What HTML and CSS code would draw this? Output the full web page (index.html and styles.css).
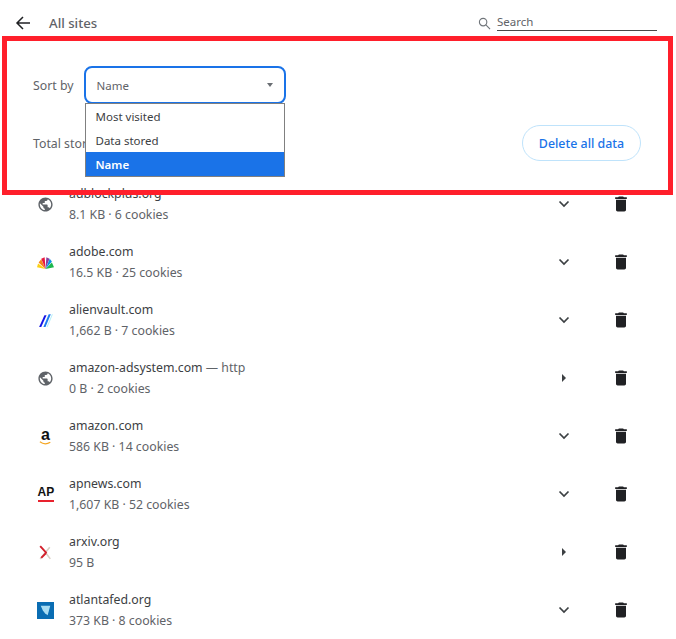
FILE: index.html
```html
<!DOCTYPE html>
<html lang="en">
<head>
<meta charset="utf-8">
<title>All sites</title>
<link rel="stylesheet" href="styles.css">
</head>
<body>
<main class="page">
  <header class="top">
    <svg class="back" viewBox="0 0 16 16"><path d="M15 8H2.500M8 2 2 8l6 6"/></svg>
    <h1 class="title">All sites</h1>
    <div class="search">
      <svg class="search-icon" viewBox="0 0 14 14"><circle cx="5.500" cy="5.500" r="4"/><path d="m8.500 8.500 4.500 4.500"/></svg>
      <div class="search-field">Search</div>
    </div>
  </header>
  <section class="controls">
    <div class="sort-row">
      <span class="label">Sort by</span>
      <div class="select-wrap">
        <div class="select"><span>Name</span><i class="caret"></i></div>
        <ul class="menu">
          <li>Most visited</li>
          <li>Data stored</li>
          <li class="selected">Name</li>
        </ul>
      </div>
    </div>
    <div class="total-row">
      <span class="label">Total storage</span>
      <button class="delete-all">Delete all data</button>
    </div>
  </section>
  <ul class="sites">
    <li class="site">
      <svg class="fav" viewBox="0 0 24 24"><path class="globe" d="M12 2C6.480 2 2 6.480 2 12s4.480 10 10 10 10-4.480 10-10S17.520 2 12 2zm-1 17.930c-3.950-.49-7-3.850-7-7.930 0-.62.08-1.210.21-1.790L9 15v1c0 1.100.9 2 2 2v1.930zm6.900-2.540c-.26-.81-1-1.390-1.900-1.390h-1v-3c0-.55-.45-1-1-1H8v-2h2c.55 0 1-.45 1-1V7h2c1.100 0 2-.9 2-2v-.41c2.930 1.190 5 4.060 5 7.410 0 2.080-.8 3.970-2.100 5.390z"/></svg>
      <div class="info"><div class="name">adblockplus.org</div><div class="meta">8.1 KB · 6 cookies</div></div>
      <svg class="toggle" viewBox="0 0 12 8"><path d="m1.500 1.500 4.500 4.500 4.500-4.500"/></svg>
      <svg class="trash" viewBox="0 0 24 24"><path d="M6 19c0 1.100.9 2 2 2h8c1.100 0 2-.9 2-2V7H6v12zM19 4h-3.500l-1-1h-5l-1 1H5v2h14V4z"/></svg>
    </li>
    <li class="site">
      <svg class="fav" viewBox="0 0 16 16"><path fill="#fcd116" d="M8 14 0 12.500 1 9z"/><path fill="#f5821f" d="M8 14 1.500 8 4 5z"/><path fill="#e8173f" d="M8 14 4 4.500l3.200-1.500z"/><path fill="#8a3f9e" d="M8 14 8.800 3l3 1.500z"/><path fill="#0a8fe6" d="m8 14 4-9.500L14 7z"/><path fill="#1cb84e" d="m8 14 6-6 2 4.500z"/></svg>
      <div class="info"><div class="name">adobe.com</div><div class="meta">16.5 KB · 25 cookies</div></div>
      <svg class="toggle" viewBox="0 0 12 8"><path d="m1.500 1.500 4.500 4.500 4.500-4.500"/></svg>
      <svg class="trash" viewBox="0 0 24 24"><path d="M6 19c0 1.100.9 2 2 2h8c1.100 0 2-.9 2-2V7H6v12zM19 4h-3.500l-1-1h-5l-1 1H5v2h14V4z"/></svg>
    </li>
    <li class="site">
      <svg class="fav" viewBox="0 0 16 16"><path fill="#1414e6" d="M2 14 7 3h2L4 14z"/><path fill="#1d7bf0" d="M6 14 11 2h2L8 14z"/><path fill="#b5effa" d="M9 14 14 2h1l-5 12z"/></svg>
      <div class="info"><div class="name">alienvault.com</div><div class="meta">1,662 B · 7 cookies</div></div>
      <svg class="toggle" viewBox="0 0 12 8"><path d="m1.500 1.500 4.500 4.500 4.500-4.500"/></svg>
      <svg class="trash" viewBox="0 0 24 24"><path d="M6 19c0 1.100.9 2 2 2h8c1.100 0 2-.9 2-2V7H6v12zM19 4h-3.500l-1-1h-5l-1 1H5v2h14V4z"/></svg>
    </li>
    <li class="site">
      <svg class="fav" viewBox="0 0 24 24"><path class="globe" d="M12 2C6.480 2 2 6.480 2 12s4.480 10 10 10 10-4.480 10-10S17.520 2 12 2zm-1 17.930c-3.950-.49-7-3.850-7-7.930 0-.62.08-1.210.21-1.790L9 15v1c0 1.100.9 2 2 2v1.930zm6.900-2.540c-.26-.81-1-1.390-1.900-1.390h-1v-3c0-.55-.45-1-1-1H8v-2h2c.55 0 1-.45 1-1V7h2c1.100 0 2-.9 2-2v-.41c2.930 1.190 5 4.060 5 7.410 0 2.080-.8 3.970-2.100 5.390z"/></svg>
      <div class="info"><div class="name">amazon-adsystem.com <span class="scheme">— http</span></div><div class="meta">0 B · 2 cookies</div></div>
      <svg class="toggle arrow" viewBox="0 0 12 8"><path d="M4 0v8l4-4z"/></svg>
      <svg class="trash" viewBox="0 0 24 24"><path d="M6 19c0 1.100.9 2 2 2h8c1.100 0 2-.9 2-2V7H6v12zM19 4h-3.500l-1-1h-5l-1 1H5v2h14V4z"/></svg>
    </li>
    <li class="site">
      <div class="fav-box amazon"><span>a</span><svg class="smile" viewBox="0 0 16 5"><path d="M1 1c4 3 9 3 13 .5"/></svg></div>
      <div class="info"><div class="name">amazon.com</div><div class="meta">586 KB · 14 cookies</div></div>
      <svg class="toggle" viewBox="0 0 12 8"><path d="m1.500 1.500 4.500 4.500 4.500-4.500"/></svg>
      <svg class="trash" viewBox="0 0 24 24"><path d="M6 19c0 1.100.9 2 2 2h8c1.100 0 2-.9 2-2V7H6v12zM19 4h-3.500l-1-1h-5l-1 1H5v2h14V4z"/></svg>
    </li>
    <li class="site">
      <div class="fav-box ap"><span>AP</span></div>
      <div class="info"><div class="name">apnews.com</div><div class="meta">1,607 KB · 52 cookies</div></div>
      <svg class="toggle" viewBox="0 0 12 8"><path d="m1.500 1.500 4.500 4.500 4.500-4.500"/></svg>
      <svg class="trash" viewBox="0 0 24 24"><path d="M6 19c0 1.100.9 2 2 2h8c1.100 0 2-.9 2-2V7H6v12zM19 4h-3.500l-1-1h-5l-1 1H5v2h14V4z"/></svg>
    </li>
    <li class="site">
      <svg class="fav" viewBox="0 0 16 16"><path stroke="#d8d0c4" stroke-width="1.500" d="M12 3 3 14M8 8l4.500 6"/><path stroke="#d3202c" stroke-width="1.800" d="M3 2l6 6.500M4 13l4.500-4.500"/></svg>
      <div class="info"><div class="name">arxiv.org</div><div class="meta">95 B</div></div>
      <svg class="toggle arrow" viewBox="0 0 12 8"><path d="M4 0v8l4-4z"/></svg>
      <svg class="trash" viewBox="0 0 24 24"><path d="M6 19c0 1.100.9 2 2 2h8c1.100 0 2-.9 2-2V7H6v12zM19 4h-3.500l-1-1h-5l-1 1H5v2h14V4z"/></svg>
    </li>
    <li class="site">
      <svg class="fav" viewBox="0 0 16 16"><rect width="16" height="16" fill="#0a6db3"/><path fill="#a8dcf2" d="M3.500 3.500h9L10 12.500 7.500 10.500 5.500 8z"/></svg>
      <div class="info"><div class="name">atlantafed.org</div><div class="meta">373 KB · 8 cookies</div></div>
      <svg class="toggle" viewBox="0 0 12 8"><path d="m1.500 1.500 4.500 4.500 4.500-4.500"/></svg>
      <svg class="trash" viewBox="0 0 24 24"><path d="M6 19c0 1.100.9 2 2 2h8c1.100 0 2-.9 2-2V7H6v12zM19 4h-3.500l-1-1h-5l-1 1H5v2h14V4z"/></svg>
    </li>
  </ul>
  <div class="highlight"></div>
</main>
</body>
</html>
```
FILE: styles.css
```css
* { box-sizing: border-box; }
html, body { margin: 0; height: 100%; background: #fff; overflow: hidden; }
body { font-family: "Noto Sans", "Open Sans", sans-serif; font-size: 12.300px; color: #3c4043; }
.page { position: relative; height: 639px; overflow: hidden; }
.top { display: flex; align-items: center; height: 46px; padding: 0 19px 0 15px; }
.back { width: 16px; height: 16px; fill: none; stroke: #202124; stroke-width: 1.500; }
.title { margin: 0 0 0 18px; font-size: 13.200px; font-weight: 500; color: #5f6368; flex: 1; }
.search { display: flex; align-items: center; gap: 6px; }
.search-icon { width: 13px; height: 13px; fill: none; stroke: #70757a; stroke-width: 1.200; }
.search-field { width: 160px; height: 16px; line-height: 14px; font-size: 11.500px; border-bottom: 1px solid #4a4a4a; color: #5f6368; margin-top: -1px; }
.controls { padding: 20px 32px 0 33px; }
.sort-row { display: flex; align-items: center; gap: 10px; height: 38px; }
.label { color: #5f6368; white-space: nowrap; }
.select-wrap { position: relative; }
.select { display: flex; align-items: center; justify-content: space-between; width: 202px; height: 38px; padding: 0 11px 0 11px; border: 2px solid #1a73e8; border-radius: 8px; color: #5f6368; font-size: 11.500px; }
.caret { width: 0; height: 0; border-left: 3.500px solid transparent; border-right: 3.500px solid transparent; border-top: 4px solid #6a6e73; }
.menu { position: absolute; z-index: 2; top: 37px; left: 1px; width: 200px; height: 74px; margin: 0; padding: 0; list-style: none; background: #fff; border: 1px solid #808080; }
.menu li { height: 24px; line-height: 26px; padding-left: 10px; color: #3c4043; font-size: 11.500px; }
.menu .selected { background: #1a73e8; color: #fff; font-weight: 600; }
.total-row { display: flex; align-items: center; justify-content: space-between; height: 36px; margin-top: 21px; padding-right: 3px; }
.delete-all { width: 119px; height: 36px; padding: 0; border: 1px solid #bfe3fb; border-radius: 18px; background: #fff; color: #1a73e8; font: 500 12.400px "Noto Sans", sans-serif; }
.sites { margin: 14px 0 0; padding: 0; list-style: none; }
.site { display: flex; align-items: center; height: 58px; padding-left: 37px; }
.fav, .fav-box { flex: none; width: 17px; height: 17px; }
.fav { fill: none; }
.globe { fill: #5f6368; }
.fav-box { display: flex; flex-direction: column; align-items: center; justify-content: center; position: relative; }
.amazon span { font: 700 16px/13px "Liberation Sans", sans-serif; color: #111; }
.smile { width: 15px; height: 5px; fill: none; stroke: #f5a623; stroke-width: 1.500; }
.ap span { font: 700 12px/11px "Liberation Sans", sans-serif; color: #111; border-bottom: 2px solid #e8222e; width: 16px; text-align: center; padding-bottom: 2px; }
.info { width: 484px; margin-left: 15px; flex: none; padding-top: 1px; line-height: 20px; }
.name { color: #3c4043; }
.scheme { color: #5f6368; }
.meta { color: #5f6368; margin-top: 1px; }
.toggle { flex: none; width: 12px; height: 8px; margin-left: 5px; fill: none; stroke: #3c4043; stroke-width: 1.700; }
.arrow { fill: #3c4043; stroke: none; }
.trash { flex: none; width: 20px; height: 20px; margin-left: 41px; fill: #202124; }
.highlight { position: absolute; z-index: 3; left: 2px; top: 36px; width: 671px; height: 159px; border: 5px solid #ff1f2b; pointer-events: none; }
```
